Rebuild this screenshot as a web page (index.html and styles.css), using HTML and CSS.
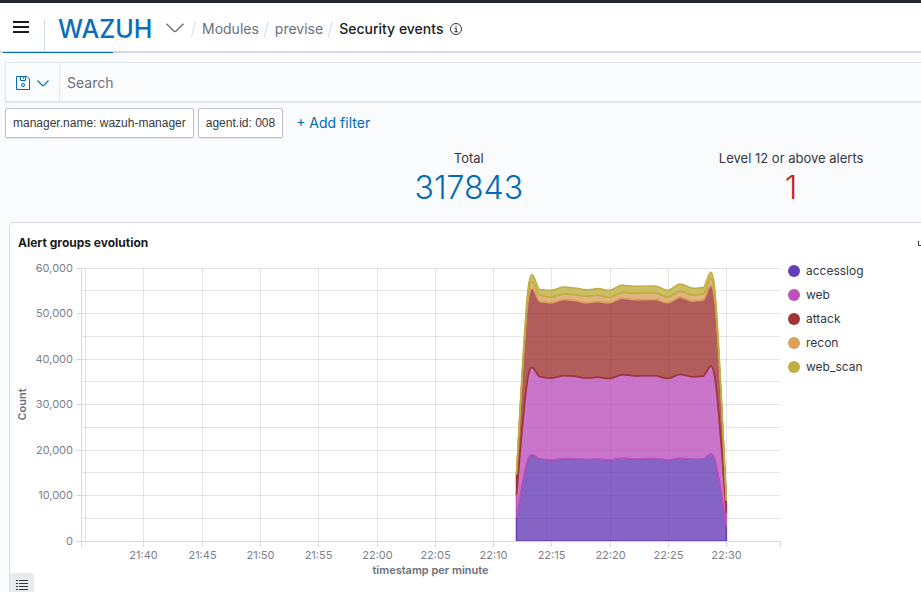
FILE: index.html
```html
<!DOCTYPE html>
<html lang="en">
<head>
    <meta charset="UTF-8">
    <meta name="viewport" content="width=device-width, initial-scale=1.0">
    <title>Security events - Wazuh</title>
    <link rel="stylesheet" href="styles.css">
</head>
<body>
    <header class="header">
        <button class="icon-button menu-button" aria-label="Menu">
            <svg width="16" height="12" viewBox="0 0 16 12"><path d="M0 1h16M0 6h16M0 11h16" stroke="#1a1c21" stroke-width="2"/></svg>
        </button>
        <a class="logo" href="#">WAZUH</a>
        <button class="icon-button module-button" aria-label="Modules menu">
            <svg width="18" height="10" viewBox="0 0 18 10"><path d="M0.5 0.8L7.8 8q1.2 1 2.4 0L17.5 0.8" fill="none" stroke="#69707d" stroke-width="1.4"/></svg>
        </button>
        <nav class="breadcrumbs">
            <a href="#">Modules</a>
            <a href="#">previse</a>
            <span class="current">Security events</span>
        </nav>
        <svg class="info" width="12" height="12" viewBox="0 0 12 12"><circle cx="6" cy="6" r="5.5" fill="none" stroke="#343741"/><path d="M4.5 5.2H6.2V8.8M4.3 8.8H8M5.5 3.2h1.2" fill="none" stroke="#343741" stroke-width="1.1"/></svg>
    </header>

    <div class="search-bar">
        <button class="icon-button save-button" aria-label="Saved queries">
            <svg width="14" height="14" viewBox="0 0 14 14" fill="none" stroke="#006bb4"><path d="M0.5 0.5H11L13.5 3V13.5H0.5ZM4.5 0.5V4.5H9.5V0.5M7.5 1.5V3"/><circle cx="7" cy="9" r="1.5"/></svg>
            <svg width="12" height="7" viewBox="0 0 12 7"><path d="M0.5 0.5L5.2 5.3q.8.7 1.6 0L11.5 0.5" fill="none" stroke="#006bb4" stroke-width="1.2"/></svg>
        </button>
        <input type="text" placeholder="Search" aria-label="Search">
    </div>

    <div class="filters">
        <button class="filter">manager.name: wazuh-manager</button>
        <button class="filter">agent.id: 008</button>
        <button class="add-filter">+ Add filter</button>
    </div>

    <div class="stats">
        <div class="stat">
            <div class="stat-label">Total</div>
            <div class="stat-value">317843</div>
        </div>
        <div class="stat">
            <div class="stat-label">Level 12 or above alerts</div>
            <div class="stat-value danger">1</div>
        </div>
    </div>

    <section class="panel">
        <div class="panel-header">
            <h2>Alert groups evolution</h2>
            <button class="icon-button" aria-label="Full screen">
                <svg width="10" height="8" viewBox="0 0 10 8"><path d="M0.5 2V6.5H4M3 2.5h1M9.5 2v4.5H6" fill="none" stroke="#343741"/></svg>
            </button>
        </div>
        <div class="panel-body">
            <svg class="chart" id="chart" role="img" aria-label="Alert groups evolution"></svg>
            <ul class="legend" id="legend"></ul>
        </div>
        <button class="icon-button legend-toggle" aria-label="Toggle legend">
            <svg width="12" height="11" viewBox="0 0 12 11"><path d="M0 0.5h2M0 3.5h2M0 6.5h2M0 9.5h2M3 0.5h9M3 3.5h9M3 6.5h9M3 9.5h9" stroke="#343741"/></svg>
        </button>
    </section>

    <script>
        const chart = document.getElementById('chart');
        const legend = document.getElementById('legend');

        // Stacked tops in thousands, one value per minute from 22:12 to 22:30
        const series = [
            { name: 'accesslog', color: '#663db8', top: [5, 18, 18, 17.8, 18.1, 18.1, 17.9, 18, 17.8, 18.2, 18.1, 18.1, 18.1, 17.8, 18.2, 18, 18, 18, 3.1] },
            { name: 'web', color: '#bc52bc', top: [10.1, 36.2, 36.1, 35.8, 36.3, 36.2, 35.8, 36, 35.7, 36.5, 36.3, 36.3, 36.3, 35.7, 36.6, 36.1, 36.2, 36.2, 6.1] },
            { name: 'attack', color: '#9e3533', top: [14.6, 52.7, 52.6, 52.3, 53, 52.8, 52.3, 52.6, 52.3, 53.3, 53, 53, 53, 52.3, 53.5, 52.7, 52.9, 52.8, 8.8] },
            { name: 'recon', color: '#daa05d', top: [14.6, 54.1, 54, 53.6, 54.3, 54.1, 53.8, 54, 53.6, 54.6, 54.5, 54.5, 54.5, 53.6, 54.9, 54.1, 54.3, 54.3, 8.9] },
            { name: 'web_scan', color: '#bfaf40', top: [14.6, 55.6, 55.3, 55.1, 55.8, 55.6, 55.2, 55.5, 55.1, 56.2, 56, 56, 56, 55.1, 56.5, 55.6, 55.7, 55.6, 8.9] }
        ];
        const times = ['', '21:40', '21:45', '21:50', '21:55', '22:00', '22:05', '22:10', '22:15', '22:20', '22:25', '22:30'];
        const left = 71;
        const topY = 14;
        const plotHeight = 273;
        const bottom = topY + plotHeight;

        function y(value) {
            return bottom - value / 60 * plotHeight;
        }

        // Cardinal curve through the points
        function curve(points) {
            let d = '';
            for (let i = 0; i < points.length - 1; i++) {
                const p0 = points[i - 1] || points[i];
                const p1 = points[i];
                const p2 = points[i + 1];
                const p3 = points[i + 2] || p2;
                d += `C${p1[0] + (p2[0] - p0[0]) / 6} ${p1[1] + (p2[1] - p0[1]) / 6} ${p2[0] - (p3[0] - p1[0]) / 6} ${p2[1] - (p3[1] - p1[1]) / 6} ${p2[0]} ${p2[1]}`;
            }
            return d;
        }

        function drawChart() {
            const right = chart.clientWidth - 1;
            const minute = (right - left - 4) / 59.6;
            const x = m => left + 4 + m * minute;
            let html = '';

            for (let v = 0; v <= 60; v += 5) {
                const gy = Math.floor(y(v)) + 0.5;
                html += `<line class="grid" x1="${left}" x2="${right}" y1="${gy}" y2="${gy}"/>`;
                if (v % 10 === 0) {
                    html += `<line class="axis" x1="${left - 5}" x2="${left}" y1="${gy}" y2="${gy}"/>`;
                    html += `<text class="tick" x="${left - 8}" y="${gy + 3}" text-anchor="end">${v ? v + ',000' : 0}</text>`;
                }
            }
            times.forEach((time, i) => {
                const gx = Math.round(x(i * 5)) + 0.5;
                html += `<line class="grid" x1="${gx}" x2="${gx}" y1="${topY}" y2="${bottom}"/>`;
                if (time) {
                    html += `<line class="axis" x1="${gx}" x2="${gx}" y1="${bottom}" y2="${bottom + 6}"/>`;
                    html += `<text class="tick" x="${gx}" y="${bottom + 18}" text-anchor="middle">${time}</text>`;
                }
            });

            // each area is outlined in its own colour, over the one below it
            let base = series[0].top.map((v, i) => [x(37 + i), bottom]);
            series.forEach(s => {
                const points = s.top.map((v, i) => [x(37 + i), y(v)]);
                const back = base.slice().reverse();
                html += `<path class="area" d="M${points[0]}${curve(points)}L${back[0]}${curve(back)}Z" fill="${s.color}" stroke="${s.color}"/>`;
                base = points;
            });

            html += `<path class="axis" d="M${left + 0.5} ${topY}V${bottom + 6}M${left} ${bottom + 0.5}H${right + 0.5}V${bottom + 6}"/>`;
            html += `<text class="axis-title" x="${(left + right) / 2}" y="${bottom + 33}" text-anchor="middle">timestamp per minute</text>`;
            html += `<text class="axis-title" transform="translate(16 ${topY + plotHeight / 2}) rotate(-90)" text-anchor="middle">Count</text>`;
            chart.innerHTML = html;
        }

        legend.innerHTML = series.map(s => `<li><span class="dot" style="background: ${s.color}"></span>${s.name}</li>`).join('');
        drawChart();
        window.addEventListener('resize', drawChart);
    </script>
</body>
</html>
```
FILE: styles.css
```css
* {
    box-sizing: border-box;
}

body {
    font-family: Inter, sans-serif;
    font-size: 14px;
    margin: 0;
    color: #343741;
    background-color: #fafbfd;
    border-top: 3px solid #25282f;
    overflow: hidden;
}

button {
    font-family: inherit;
    cursor: pointer;
}

a {
    text-decoration: none;
}

.icon-button {
    display: flex;
    align-items: center;
    justify-content: center;
    padding: 0;
    border: none;
    background: none;
}

.header {
    position: relative;
    display: flex;
    align-items: center;
    height: 50px;
    background-color: #fff;
    border-bottom: 2px solid #d3dae6;
}

/* active tab line */
.header::after {
    content: "";
    position: absolute;
    left: 3px;
    bottom: -2px;
    width: 110px;
    height: 1px;
    background-color: #006bb4;
}

.menu-button {
    align-self: flex-end;
    width: 45px;
    height: 32px;
    padding: 0 3px 16px 0;
    border-right: 1px solid #d3dae6;
}

.logo {
    margin: 3px 0 0 13px;
    width: 98px;
    font-size: 25px;
    font-weight: 500;
    line-height: 24px;
    color: #0a6ebd;
}

.module-button {
    margin: 2px 0 0 10px;
}

.breadcrumbs {
    display: flex;
    align-items: center;
    margin: 4px 0 0 2px;
    line-height: 20px;
}

.breadcrumbs a,
.breadcrumbs .current {
    display: flex;
    align-items: center;
    color: #69707d;
}

.breadcrumbs a::before,
.breadcrumbs .current::before {
    content: "";
    width: 1px;
    height: 16px;
    margin: 0 8px 0 7px;
    background-color: #d3dae6;
    transform: rotate(15deg);
}

.breadcrumbs .current {
    color: #1a1c21;
    font-weight: 500;
}

.info {
    margin: 4px 0 0 7px;
}

.search-bar {
    display: flex;
    height: 40px;
    margin: 9px -8px 0 5px;
    border: 1px solid #e0e4ed;
    background-color: #fbfcfd;
    box-shadow: 0 1px 1px #e6e9f0;
}

.save-button {
    flex: none;
    width: 54px;
    padding-top: 2px;
    gap: 7px;
    border-right: 1px solid #e0e4ed;
}

.search-bar input {
    flex: 1;
    padding: 0 7px;
    border: none;
    background: none;
    font-family: inherit;
    font-size: 14px;
}

.search-bar input::placeholder {
    color: #69707d;
}

.filters {
    display: flex;
    gap: 4px;
    margin: 6px 5px 0;
}

.filter {
    height: 30px;
    padding: 0 7px;
    border: 1px solid #b9c0cf;
    border-radius: 2px;
    background-color: #fff;
    box-shadow: 0 1px 1px #e6e9f0;
    font-family: "Liberation Sans", sans-serif;
    font-size: 12px;
    color: #343741;
}

.add-filter {
    margin-left: 9px;
    padding: 0 0 2px;
    border: none;
    background: none;
    font-size: 14px;
    color: #006bb4;
}

.stats {
    display: grid;
    grid-template-columns: 35vw 35vw;
    height: 74px;
    margin-top: 10px;
    padding-left: 33.4%;
}

.stat {
    text-align: center;
}

.stat-label {
    font-size: 13px;
    line-height: 20px;
}

.stat-value {
    font-size: 32px;
    font-weight: 300;
    line-height: 40px;
    color: #006bb4;
}

.stat-value.danger {
    color: #bd271e;
}

.panel {
    margin: 0 -8px 0 9px;
    border: 1px solid #d3dae6;
    border-radius: 4px;
    background-color: #fff;
}

.panel-header {
    display: flex;
    align-items: center;
    justify-content: space-between;
    height: 31px;
    padding: 8px 0 0 8px;
}

.panel-header h2 {
    margin: 0;
    font-size: 12px;
    font-weight: 700;
    color: #1a1c21;
}

.panel-body {
    display: flex;
}

.chart {
    flex: 1;
    min-width: 0;
    height: 325px;
}

.legend {
    flex: none;
    width: 147px;
    margin: 0;
    padding: 5px 0 0 7px;
    list-style: none;
    font-size: 12px;
    line-height: 24px;
}

.legend li {
    display: flex;
    align-items: center;
    gap: 6px;
}

.dot {
    width: 12px;
    height: 12px;
    border-radius: 50%;
}

.grid {
    stroke: #000;
    stroke-opacity: 0.1;
}

.area {
    fill-opacity: 0.8;
    stroke-width: 1.5px;
}

.axis {
    fill: none;
    stroke: #d6d8dc;
}

.tick {
    font-size: 11px;
    fill: #7b808c;
}

.axis-title {
    font-size: 11px;
    font-weight: 600;
    fill: #69707d;
}

.legend-toggle {
    width: 24px;
    height: 24px;
    margin-top: -6px;
    border-radius: 4px 4px 0 0;
    background-color: #e9eaec;
}
```
